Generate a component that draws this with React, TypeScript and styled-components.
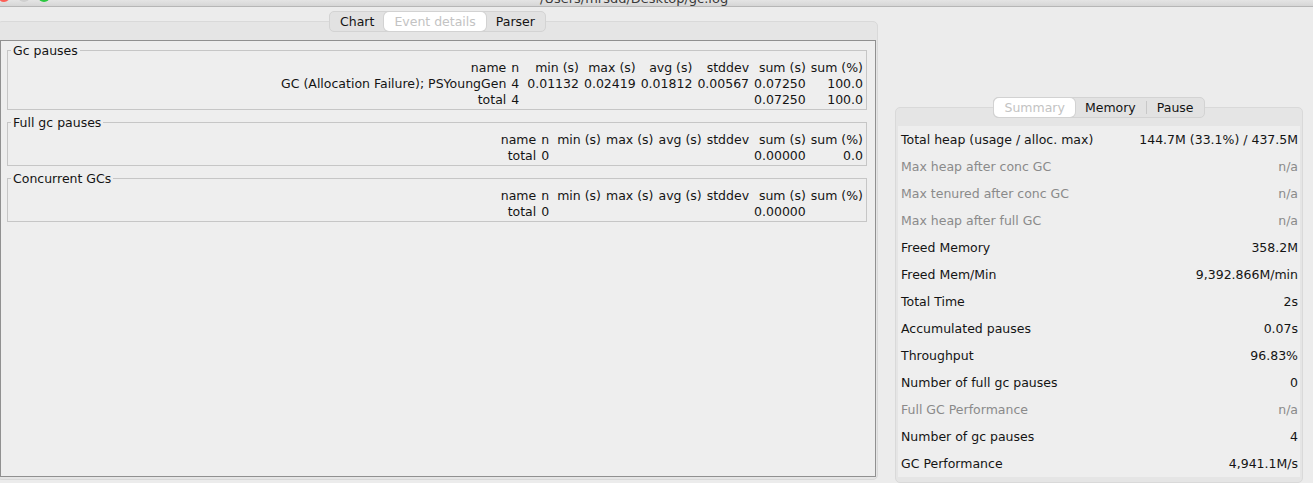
import React from "react";
import styled, { createGlobalStyle } from "styled-components";

const GlobalStyle = createGlobalStyle`
  html, body {
    margin: 0;
    padding: 0;
    background: #ececec;
  }
  body {
    font-family: "DejaVu Sans", "Liberation Sans", sans-serif;
    font-size: 12.5px;
    color: #141414;
    overflow: hidden;
  }
  * { box-sizing: border-box; }
`;

const Window = styled.div`
  width: 1313px;
  height: 483px;
  display: flex;
  flex-direction: column;
  background: #ececec;
  overflow: hidden;
`;

const TitleBar = styled.div`
  flex: none;
  height: 7px;
  display: flex;
  align-items: flex-end;
  overflow: hidden;
  background: linear-gradient(#e4e4e4, #d6d6d6);
  border-bottom: 1px solid #b6b6b6;
`;

const Lights = styled.div`
  display: flex;
  gap: 8px;
  margin-left: -2px;
  margin-bottom: 4px;
`;

const Light = styled.span<{ $color: string }>`
  width: 12px;
  height: 12px;
  border-radius: 50%;
  background: ${(p) => p.$color};
`;

const Title = styled.span`
  margin-left: 490px;
  font-size: 13px;
  line-height: 14px;
  color: #3a3a3a;
  white-space: nowrap;
`;

const Main = styled.div`
  flex: 1;
  display: flex;
  min-height: 0;
`;

const LeftColumn = styled.div`
  width: 881px;
  margin-left: -3px;
  padding: 4px 0 3px;
  display: flex;
  flex-direction: column;
`;

const RightColumn = styled.div`
  width: 408px;
  margin-left: auto;
  margin-right: 10px;
  padding-top: 90px;
  display: flex;
  flex-direction: column;
`;

const Segmented = styled.div`
  align-self: center;
  position: relative;
  z-index: 1;
  display: flex;
  align-items: stretch;
  height: 21px;
  margin-bottom: -11px;
  background: #e2e2e2;
  border: 1px solid #d3d3d3;
  border-radius: 5px;
`;

const Segment = styled.div<{ $active?: boolean }>`
  display: flex;
  align-items: center;
  padding: 0 10px;
  border-radius: 5px;
  white-space: nowrap;
  color: ${(p) => (p.$active ? "#c3c3c3" : "#141414")};
  background: ${(p) => (p.$active ? "#ffffff" : "transparent")};
  box-shadow: ${(p) => (p.$active ? "0 0 0 1px #d2d2d2" : "none")};
`;

const SegDivider = styled.span`
  align-self: center;
  width: 1px;
  height: 13px;
  background: #c8c8c8;
`;

const TabPane = styled.div<{ $pad: string }>`
  flex: 1;
  display: flex;
  flex-direction: column;
  background: #e5e5e5;
  border: 1px solid #d9d9d9;
  border-radius: 5px;
  padding: ${(p) => p.$pad};
`;

const DetailsPanel = styled.div`
  flex: 1;
  display: flex;
  flex-direction: column;
  gap: 3px;
  background: #eeeeee;
  border: 1px solid #909090;
  padding: 0 8px 0 6px;
`;

const Group = styled.fieldset`
  margin: 0;
  min-width: 0;
  padding: 1px 3px 1px 0;
  border: 1px solid #c6c6c6;
`;

const GroupTitle = styled.legend`
  margin-left: 3px;
  padding: 2px 2px 0;
  font-size: 12.5px;
  line-height: 16px;
  color: #141414;
`;

const StatsGrid = styled.div`
  display: grid;
  grid-template-columns: repeat(8, auto);
  justify-content: end;
  column-gap: 5px;
  line-height: 16px;
`;

const Cell = styled.span<{ $count?: boolean }>`
  text-align: right;
  white-space: nowrap;
  padding-right: ${(p) => (p.$count ? "3px" : "0")};
`;

const SummaryList = styled.div`
  display: flex;
  flex-direction: column;
  background: #eeeeee;
`;

const SummaryRow = styled.div<{ $muted?: boolean }>`
  height: 27px;
  display: flex;
  align-items: center;
  justify-content: space-between;
  padding: 0 2px 0 3px;
  white-space: nowrap;
  color: ${(p) => (p.$muted ? "#8a8a8a" : "#141414")};
`;

const header = ["name", "n", "min (s)", "max (s)", "avg (s)", "stddev", "sum (s)", "sum (%)"];

const groups: { title: string; rows: string[][] }[] = [
  {
    title: "Gc pauses",
    rows: [
      header,
      ["GC (Allocation Failure); PSYoungGen", "4", "0.01132", "0.02419", "0.01812", "0.00567", "0.07250", "100.0"],
      ["total", "4", "", "", "", "", "0.07250", "100.0"],
    ],
  },
  {
    title: "Full gc pauses",
    rows: [header, ["total", "0", "", "", "", "", "0.00000", "0.0"]],
  },
  {
    title: "Concurrent GCs",
    rows: [header, ["total", "0", "", "", "", "", "0.00000", ""]],
  },
];

const summary: { label: string; value: string; muted?: boolean }[] = [
  { label: "Total heap (usage / alloc. max)", value: "144.7M (33.1%) / 437.5M" },
  { label: "Max heap after conc GC", value: "n/a", muted: true },
  { label: "Max tenured after conc GC", value: "n/a", muted: true },
  { label: "Max heap after full GC", value: "n/a", muted: true },
  { label: "Freed Memory", value: "358.2M" },
  { label: "Freed Mem/Min", value: "9,392.866M/min" },
  { label: "Total Time", value: "2s" },
  { label: "Accumulated pauses", value: "0.07s" },
  { label: "Throughput", value: "96.83%" },
  { label: "Number of full gc pauses", value: "0" },
  { label: "Full GC Performance", value: "n/a", muted: true },
  { label: "Number of gc pauses", value: "4" },
  { label: "GC Performance", value: "4,941.1M/s" },
];

export default function App() {
  return (
    <Window>
      <GlobalStyle />
      <TitleBar>
        <Lights>
          <Light $color="#fc5f57" />
          <Light $color="#cfcfcf" />
          <Light $color="#2bc840" />
        </Lights>
        <Title>/Users/mrsdd/Desktop/gc.log</Title>
      </TitleBar>
      <Main>
        <LeftColumn>
          <Segmented>
            <Segment>Chart</Segment>
            <Segment $active>Event details</Segment>
            <Segment>Parser</Segment>
          </Segmented>
          <TabPane $pad="18px 1px 2px 2px">
            <DetailsPanel>
              {groups.map((g) => (
                <Group key={g.title}>
                  <GroupTitle>{g.title}</GroupTitle>
                  <StatsGrid>
                    {g.rows.map((row, ri) =>
                      row.map((c, ci) => (
                        <Cell key={`${ri}-${ci}`} $count={ci === 1}>
                          {c}
                        </Cell>
                      ))
                    )}
                  </StatsGrid>
                </Group>
              ))}
            </DetailsPanel>
          </TabPane>
        </LeftColumn>
        <RightColumn>
          <Segmented>
            <Segment $active>Summary</Segment>
            <Segment>Memory</Segment>
            <SegDivider />
            <Segment>Pause</Segment>
          </Segmented>
          <TabPane $pad="18px 2px 1px 2px">
            <SummaryList>
              {summary.map((s) => (
                <SummaryRow key={s.label} $muted={s.muted}>
                  <span>{s.label}</span>
                  <span>{s.value}</span>
                </SummaryRow>
              ))}
            </SummaryList>
          </TabPane>
        </RightColumn>
      </Main>
    </Window>
  );
}
